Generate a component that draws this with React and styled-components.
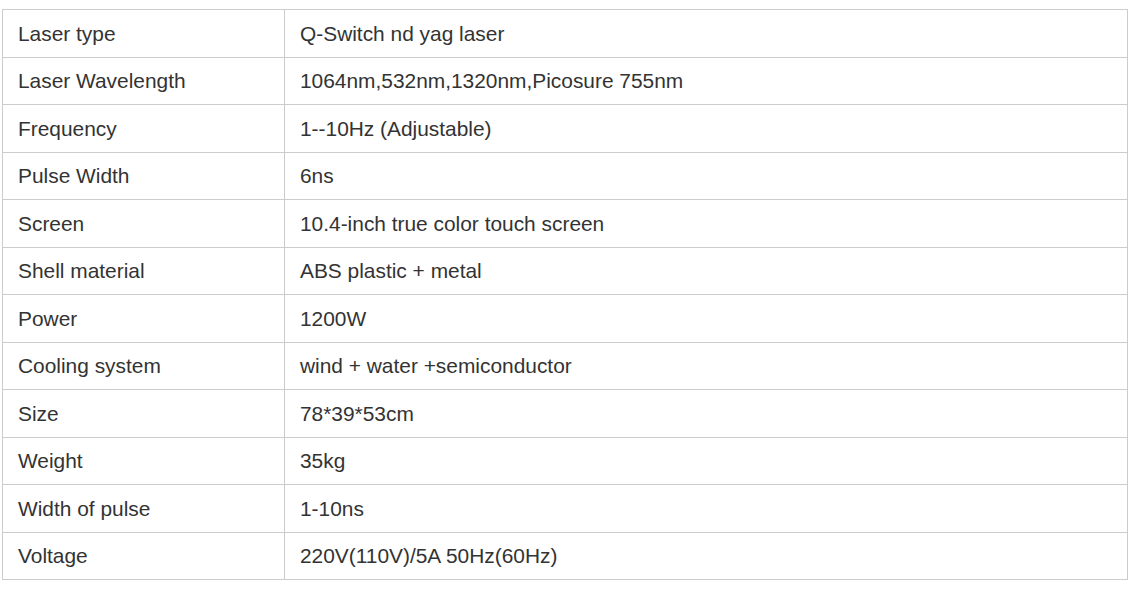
import React from "react";
import styled, { createGlobalStyle } from "styled-components";

const Global = createGlobalStyle`
  html, body { margin: 0; padding: 0; background: #fff; }
  body { font-family: "Liberation Sans", Arial, sans-serif; }
`;

const Wrapper = styled.div`
  padding: 9px 0 0 2px;
`;

const Table = styled.table`
  width: 1125px;
  border-collapse: collapse;
  table-layout: fixed;
  color: #333;
  font-size: 20.9px;
`;

const Col = styled.col`
  width: ${(p) => p.$w};
`;

const Cell = styled.td`
  height: 47.5px;
  box-sizing: border-box;
  border: 1px solid #ccc;
  padding: 1px 15px 0;
  vertical-align: middle;
  line-height: 24px;
  white-space: nowrap;
`;

const rows = [
  ["Laser type", "Q-Switch nd yag laser"],
  ["Laser Wavelength", "1064nm,532nm,1320nm,Picosure 755nm"],
  ["Frequency", "1--10Hz (Adjustable)"],
  ["Pulse Width", "6ns"],
  ["Screen", "10.4-inch true color touch screen"],
  ["Shell material", "ABS plastic + metal"],
  ["Power", "1200W"],
  ["Cooling system", "wind + water +semiconductor"],
  ["Size", "78*39*53cm"],
  ["Weight", "35kg"],
  ["Width of pulse", "1-10ns"],
  ["Voltage", "220V(110V)/5A 50Hz(60Hz)"],
];

export default function App() {
  return (
    <>
      <Global />
      <Wrapper>
        <Table>
          <colgroup>
            <Col $w="282px" />
            <Col $w="843px" />
          </colgroup>
          <tbody>
            {rows.map(([k, v]) => (
              <tr key={k}>
                <Cell>{k}</Cell>
                <Cell>{v}</Cell>
              </tr>
            ))}
          </tbody>
        </Table>
      </Wrapper>
    </>
  );
}
